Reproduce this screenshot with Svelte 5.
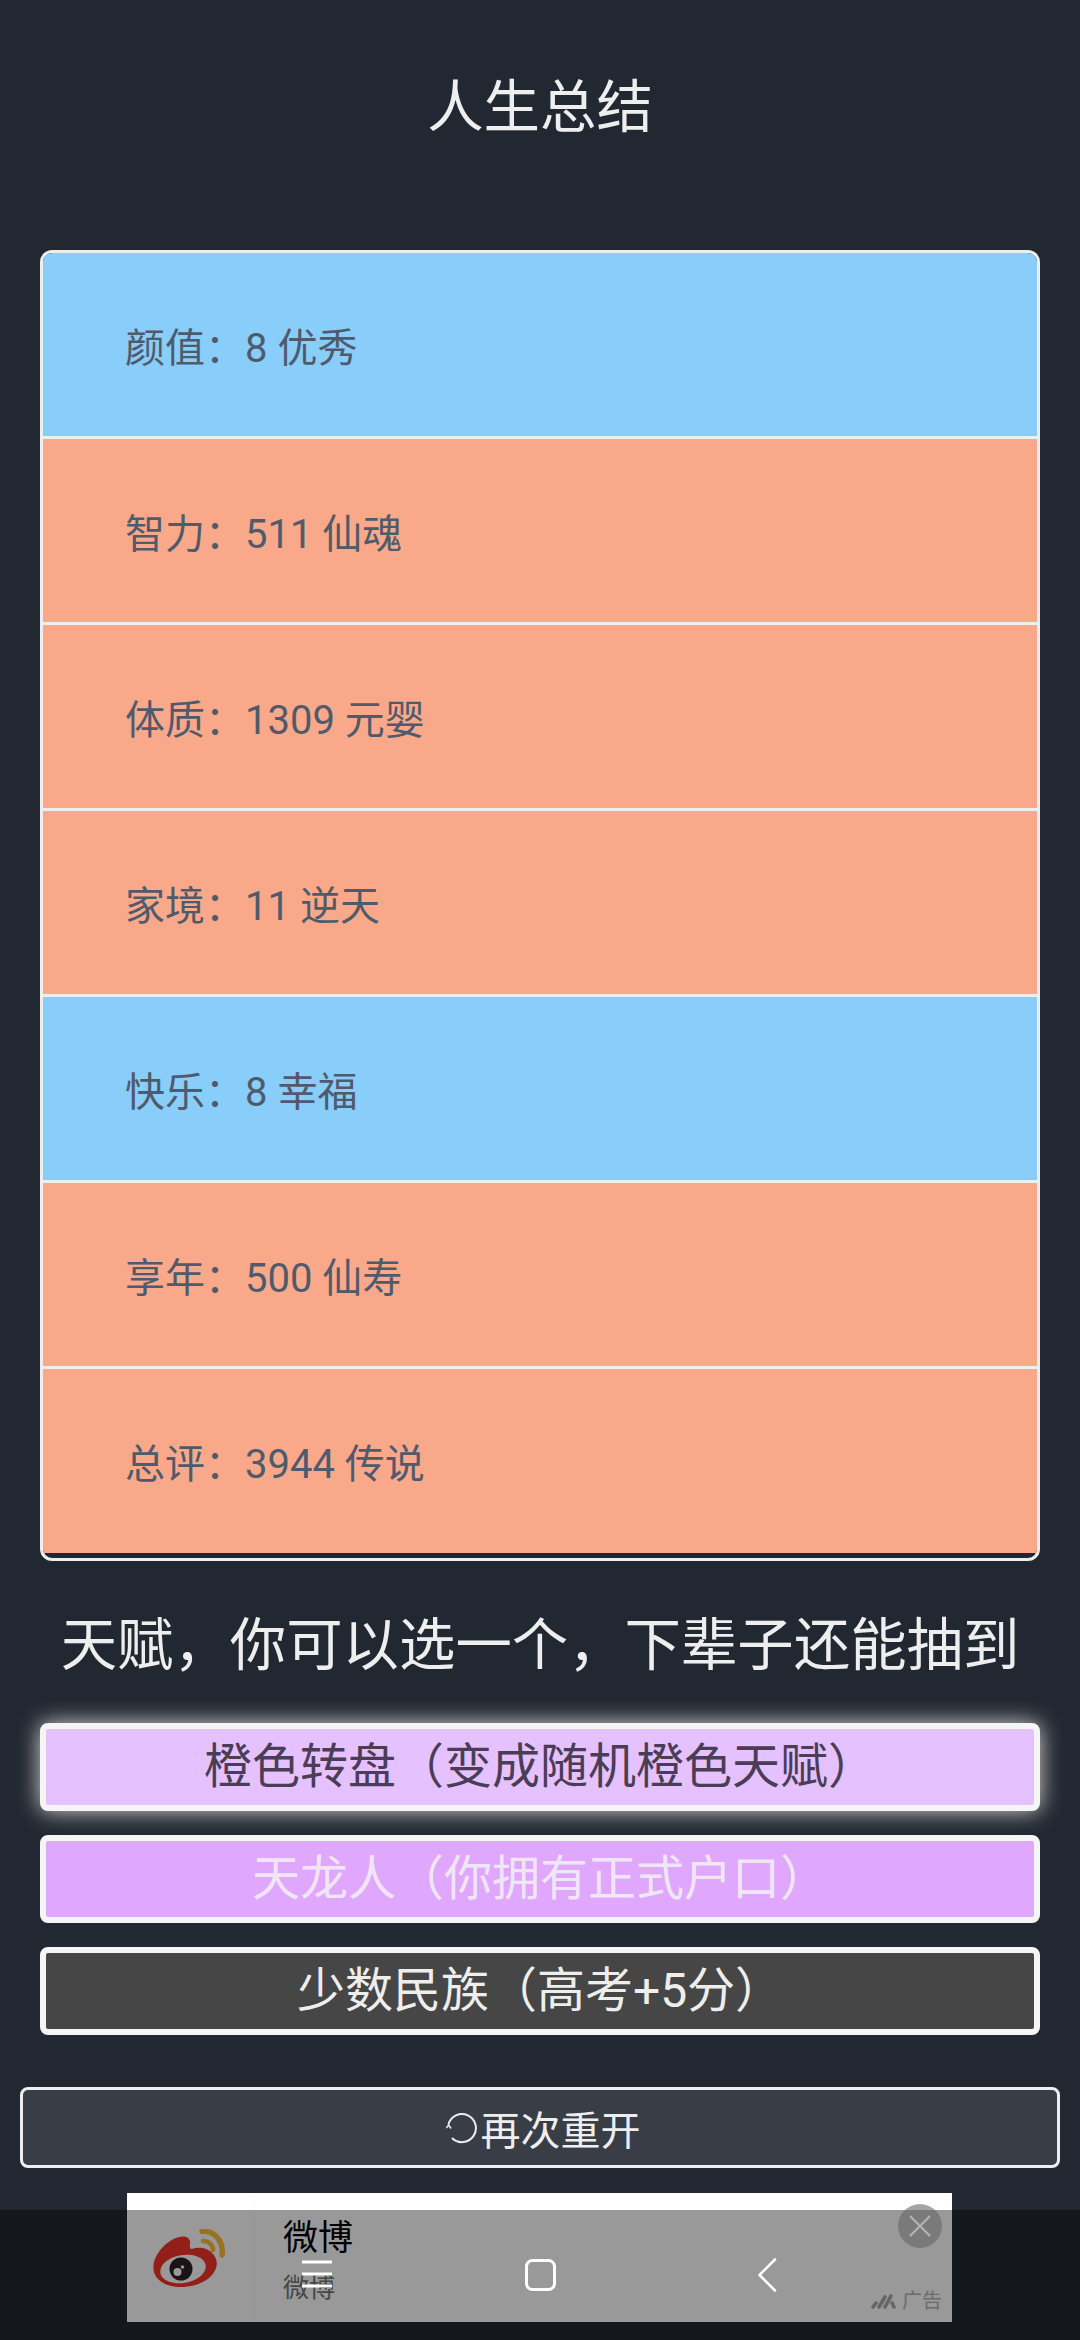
<script>
  const colon = '\uFF1A';
  const comma = '\uFF0C';
  const open = '\uFF08';
  const shut = '\uFF09';
  const stats = [
    { label: `颜值${colon}8 优秀`, tone: 'blue' },
    { label: `智力${colon}511 仙魂`, tone: 'orange' },
    { label: `体质${colon}1309 元婴`, tone: 'orange' },
    { label: `家境${colon}11 逆天`, tone: 'orange' },
    { label: `快乐${colon}8 幸福`, tone: 'blue' },
    { label: `享年${colon}500 仙寿`, tone: 'orange' },
    { label: `总评${colon}3944 传说`, tone: 'orange' }
  ];
  const heading = `天赋${comma}你可以选一个${comma}下辈子还能抽到`;
  const talents = [
    { label: `橙色转盘${open}变成随机橙色天赋${shut}`, tone: 'selected' },
    { label: `天龙人${open}你拥有正式户口${shut}`, tone: 'purple' },
    { label: `少数民族${open}高考+5分${shut}`, tone: 'grey' }
  ];
</script>

<main class="page">
  <h1 class="title">人生总结</h1>

  <ul class="stats">
    {#each stats as s}
      <li class={s.tone}>{s.label}</li>
    {/each}
  </ul>

  <h2 class="sub">{heading}</h2>

  <div class="talents">
    {#each talents as t}
      <button class={t.tone}>{t.label}</button>
    {/each}
  </div>

  <button class="again">
    <svg class="spin" viewBox="0 0 32 32" width="32" height="32" aria-hidden="true">
      <path d="M2.4 12.5A14 14 0 1 1 6 26" fill="none" stroke="#eeeeee" stroke-width="2" />
      <path d="M0.3 16 L2.6 13 L5 16.5" fill="none" stroke="#eeeeee" stroke-width="1.5" />
    </svg>再次重开
  </button>
</main>

<aside class="ad">
  <div class="ad-logo">
    <svg viewBox="0 0 72 58" width="72" height="58" aria-hidden="true">
      <path d="M0.5 36C2 24 14 11 26 8C34 6 38 10 37 15C36.5 18 37 20 39 20C45 18 54 18 60 25C66 32 65 41 56 49C47 56 36 58 28 58C12 58 -1 50 0.5 36Z" fill="#f5352a" />
      <ellipse cx="30" cy="40" rx="23" ry="14" fill="#ffffff" transform="rotate(-10 30 40)" />
      <circle cx="28" cy="40" r="11.5" fill="#2f2125" />
      <circle cx="24.5" cy="43" r="4" fill="#ffffff" />
      <circle cx="29.5" cy="38" r="1.7" fill="#ffffff" />
      <path d="M49 2.5C60 1 71 11 69 26" fill="none" stroke="#ffbf38" stroke-width="5.5" stroke-linecap="round" />
      <path d="M50 12C56 12 60 16 60 21" fill="none" stroke="#ffbf38" stroke-width="4.6" stroke-linecap="round" />
    </svg>
  </div>
  <div class="ad-text">
    <div class="ad-title">微博</div>
    <div class="ad-desc">微博</div>
  </div>
  <div class="ad-mark">
    <svg viewBox="0 0 26 16" width="26" height="16" aria-hidden="true">
      <path d="M2 14l3-4M8 14l6-10M14 14l6-11M23 14l-2-4" stroke="#aaaaaa" stroke-width="3.6" stroke-linecap="round" fill="none" />
    </svg>
    <span>广告</span>
  </div>
</aside>

<nav class="navbar">
  <svg class="nav-menu" viewBox="0 0 30 28" width="30" height="28" aria-hidden="true">
    <path d="M0 2h30M0 14h30M0 26h30" stroke="#fff" stroke-width="3" />
  </svg>
  <svg class="nav-home" viewBox="0 0 31 32" width="31" height="32" aria-hidden="true">
    <rect x="1.5" y="1.5" width="28" height="29" rx="6" fill="none" stroke="#fff" stroke-width="3" />
  </svg>
  <svg class="nav-back" viewBox="0 0 20 34" width="20" height="34" aria-hidden="true">
    <path d="M18 1.5 L2.5 17 L18 32.5" fill="none" stroke="#fff" stroke-width="2.6" stroke-linecap="round" stroke-linejoin="round" />
  </svg>
</nav>

<div class="close">
  <svg viewBox="0 0 24 24" width="24" height="24" aria-hidden="true">
    <path d="M2 2L22 22M22 2L2 22" stroke="#b4b4b4" stroke-width="2.2" />
  </svg>
</div>

<style>
  :global(body) {
    margin: 0;
    background: #222831;
  }
  :global(#app) {
    position: relative;
    width: 1080px;
    height: 2340px;
    overflow: hidden;
    background: #222831;
    font-family: Roboto, "Noto Sans CJK SC", sans-serif;
  }
  .page {
    display: flex;
    flex-direction: column;
    align-items: center;
    height: 2340px;
    box-sizing: border-box;
  }
  .title {
    margin: 68px 0 0;
    height: 80px;
    font-size: 56.4px;
    line-height: 80px;
    font-weight: 400;
    color: #eeeeee;
  }
  .stats {
    list-style: none;
    margin: 102px 0 0;
    padding: 0 0 5px;
    width: 1000px;
    box-sizing: border-box;
    border: 3px solid #eeeeee;
    border-radius: 12px;
    overflow: hidden;
  }
  .stats li {
    box-sizing: border-box;
    height: 186px;
    padding: 0 0 0 82px;
    display: flex;
    align-items: center;
    border-bottom: 3px solid #eeeeee;
    font-size: 40px;
    color: #4f5b6c;
  }
  .stats li:last-child {
    border-bottom: 0;
    height: 184px;
  }
  .blue {
    background: #89cdfb;
  }
  .orange {
    background: #f9a98a;
  }
  .sub {
    margin: 45px 0 0;
    height: 80px;
    font-size: 56.4px;
    line-height: 80px;
    font-weight: 400;
    color: #eeeeee;
    white-space: nowrap;
  }
  .talents {
    width: 1000px;
    margin-top: 37px;
    display: flex;
    flex-direction: column;
    gap: 24px;
  }
  .talents button {
    box-sizing: border-box;
    height: 88px;
    padding: 0;
    border: 6px solid #f5f5f5;
    border-radius: 8px;
    font: inherit;
    font-size: 48px;
    line-height: 76px;
  }
  .selected {
    background: #e6c1ff;
    color: #4a3d55;
    box-shadow: 0 0 22px #d8d8d8;
  }
  .purple {
    background: #e0a7fe;
    color: #f1e6f8;
  }
  .grey {
    background: #464646;
    color: #eeeeee;
  }
  .again {
    box-sizing: border-box;
    width: 1040px;
    height: 81px;
    margin-top: 52px;
    padding: 0 0 0 6px;
    border: 3px solid #eeeeee;
    border-radius: 8px;
    background: #393e46;
    color: #eeeeee;
    font: inherit;
    font-size: 40px;
    display: flex;
    align-items: center;
    justify-content: center;
  }
  .spin {
    margin-right: 3px;
  }
  .ad {
    position: absolute;
    left: 127px;
    top: 2193px;
    width: 825px;
    height: 129px;
    background: #fff;
    display: flex;
    align-items: flex-start;
  }
  .ad-logo {
    width: 128px;
    height: 129px;
    box-sizing: border-box;
    padding: 36px 0 0 26px;
    border-right: 1px solid #fbfbfb;
  }
  .ad-text {
    margin-left: 28px;
    padding-top: 21px;
  }
  .ad-title {
    font-size: 35px;
    line-height: 50px;
    color: #000;
  }
  .ad-desc {
    margin-top: 5px;
    font-size: 26px;
    line-height: 38px;
    color: #777777;
  }
  .ad-mark {
    position: absolute;
    right: 10px;
    bottom: 8px;
    display: flex;
    align-items: center;
    gap: 5px;
    font-size: 20px;
    line-height: 26px;
    color: #b5b5b5;
  }
  .navbar {
    position: absolute;
    left: 0;
    right: 0;
    top: 2210px;
    height: 130px;
    background: rgba(0, 0, 0, 0.4);
  }
  .nav-menu {
    position: absolute;
    left: 302px;
    top: 50px;
  }
  .nav-home {
    position: absolute;
    left: 525px;
    top: 49px;
  }
  .nav-back {
    position: absolute;
    left: 757px;
    top: 48px;
  }
  .close {
    position: absolute;
    left: 898px;
    top: 2204px;
    width: 44px;
    height: 44px;
    border-radius: 50%;
    background: linear-gradient(#a6a6a6 6px, #7a7a7a 6px);
    display: flex;
    align-items: center;
    justify-content: center;
  }
</style>
